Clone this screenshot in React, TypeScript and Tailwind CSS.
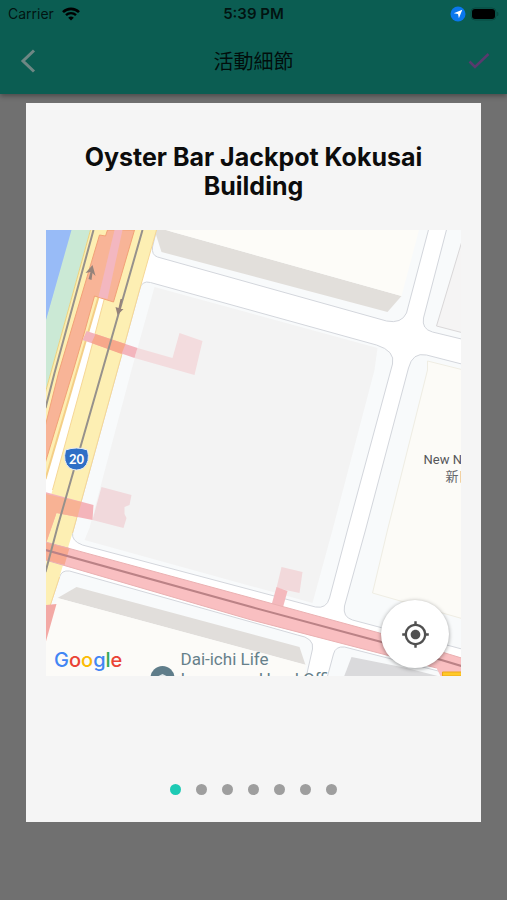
import React, { useState } from 'react'
import clsx from 'clsx'
import { MdMyLocation } from 'react-icons/md'

const SLIDES = ['1', '2', '3', '4', '5', '6', '7']

/**
 * Status Bar
 */
const StatusBar: React.FC = () => (
  <div className="grid grid-cols-3 items-center h-7 px-2 text-black/80">
    <div className="flex items-center gap-2 text-sm">
      <span>Carrier</span>
      <svg width="18" height="14" viewBox="0 0 18 14" fill="none" aria-hidden="true">
        <path d="M1 5.2a11.3 11.3 0 0 1 16 0" stroke="#000" strokeWidth="2.6" />
        <path d="M4 8.2a7.1 7.1 0 0 1 10 0" stroke="#000" strokeWidth="2.4" />
        <path d="M9 13.6 6.2 10.8a4 4 0 0 1 5.6 0Z" fill="#000" />
      </svg>
    </div>
    <p className="text-[15px] font-semibold text-center">5:39 PM</p>
    <div className="flex items-center justify-end gap-1">
      <svg width="16" height="16" viewBox="0 0 16 16" aria-hidden="true">
        <circle cx="8" cy="8" r="7.5" fill="#0a77ee" />
        <path d="M12.3 3.7 8.9 12.2 8 8 3.8 7.2Z" fill="#fff" />
      </svg>
      <svg width="29" height="14" viewBox="0 0 29 14" aria-hidden="true">
        <rect x="1" y="1" width="25" height="12" rx="4" fill="none" stroke="#084a41" />
        <rect x="2" y="2" width="23" height="10" rx="3" fill="#000" />
        <path d="M27.5 5v4q1-2 0-4Z" fill="#084a41" stroke="#084a41" />
      </svg>
    </div>
  </div>
)

/**
 * Header UI
 */
const Header: React.FC = () => (
  <header className="relative bg-[#0b5d52] shadow-[0_2px_5px_rgba(0,0,0,0.35)]">
    <StatusBar />
    <div className="flex justify-between items-center h-[66px] px-4">
      <button type="button" aria-label="Back" className="flex w-6 h-6 justify-center items-center">
        <svg width="16" height="24" viewBox="0 0 16 24" fill="none">
          <path d="M14 1.5 3 12 14 22.5" stroke="#6e8784" strokeWidth="3" />
        </svg>
      </button>
      <h1 className="text-xl text-black/85 font-['Noto_Sans_CJK_TC',sans-serif]">
        活動細節
      </h1>
      <button type="button" aria-label="Done" className="flex w-6 h-6 justify-center items-center">
        <svg width="22" height="18" viewBox="0 0 22 18" fill="none">
          <path d="M1.5 9.500 7 15 20.500 2" stroke="#593a6e" strokeWidth="2.5" />
        </svg>
      </button>
    </div>
  </header>
)

const MapDrawing: React.FC = () => (
  <svg
    className="block w-full h-full"
    viewBox="0 0 416 446"
    preserveAspectRatio="xMidYMid slice"
    role="img"
    aria-label="Map"
  >
    <rect width="416" height="446" fill="#fff" />

    {/* city blocks */}
    <g fill="#f8fafb" stroke="#d3d6dc">
      <path d="M112-4 107 17Q106 25 112 27L341 91Q356 94 361 83L384-4Z" />
      <path d="M402-4 378 88Q376 99 387 102L420 110V-4Z" />
      <path d="M94 60Q96 50 105 52.5L331 115Q350 121 347 134L302 300 284 368Q281 379 270 377L37 315Q26 311 27 303Z" />
      <path d="M420 135 381 125Q367 122 363 138L320 300 299 376Q297 387 307 390L420 420Z" />
      <path d="M-2 395 14 347Q16 340 24 341L252 405Q269 408 267 419L260 450H-2Z" />
      <path d="M281 450 288 424Q290 416 299 417L420 448V450Z" />
    </g>

    {/* buildings */}
    <path d="M109 0 116 22 342 82 356 66 127 2 115-2Z" fill="#e2dfdb" />
    <path d="M113-2 356 66 374-2Z" fill="#fdfcf8" />
    <path d="M418 6 391 96 418 103" fill="#f5f4f4" stroke="#d9d7d8" />
    <path d="M109 57 332 118 329 140 287 300 267 373 39 310 44 298 86 140Z" fill="#f3f3f3" />
    <path d="M382 131 418 140V389L327 363 342 300 382 140Z" fill="#fcfbf7" stroke="#efede3" />
    <path d="M31 357 12 368 260 435 254 417Z" fill="#e1dedb" />
    <path d="M12 368 261 435 258 446H0V400Z" fill="#fcfbf8" />
    <path d="M306 427 361 438 400 448H298Z" fill="#dadadc" />

    {/* water and river bank */}
    <path d="M0 0H27L0 94Z" fill="#98bbf7" />
    <path d="M26 0H45L0 162V92Z" fill="#cbe9d5" />

    {/* highway */}
    <path d="M45 0H63L53 67 0 249V162Z" fill="#fdeeb2" />
    <path d="M45 0 0 162" stroke="#ead27f" />
    <path d="M53 67 0 249" stroke="#f4cf87" strokeWidth="2" />
    <path d="M86 0H111L94 60 72 140 27 303 23 316 14 347 0 390V285L7 260 40 140 59 68Z" fill="#fdefb3" />
    <path d="M111 0 94 60 72 140 27 303M14 347 0 390M59 68 40 140 7 260" fill="none" stroke="#f6d796" />
    <path d="M54 5 60 6 62 0H89L68 72 49 66 39 102 27 143 0 232V195L13 143Z" fill="#f8b497" stroke="#f2a277" />
    <path d="M69 0H77L62 69 53 67Z" fill="#f3b7c0" />

    {/* underground passages */}
    <path d="M92 118 127 128 134 103 157 111 149 145 89 128Z" fill="#f3dcde" />
    <path d="M41 101 92 118 89 128 37 110Z" fill="#f3b5bd" />
    <path d="M50 104 80 114 76 124 46 113Z" fill="#f7a88b" />
    <path d="M56 257 86 265 84 275 79 277V284L81 288 78 298 47 290Z" fill="#f1d9dc" />
    <path d="M0 262 48 275 47 290 32 287 11 283 1 312H0Z" fill="#f4b4ba" />
    <path d="M0 264 36 272 32 287 11 283 1 312H0Z" fill="#f8b294" />
    <path d="M236 337 257 342 254 363 231 358Z" fill="#f2d9db" />
    <path d="M231 357 242 361 237 379 226 375Z" fill="#f4b9bd" />
    <path d="M0 375 11 374 0 413Z" fill="#f3a9a5" />

    {/* red avenue */}
    <path d="M0 312 206 368 334 403 416 428V446H395L391 438 206 390 0 330Z" fill="#f9bfc1" />
    <path d="M0 312 24 318 19 335 0 330Z" fill="#f8aa91" />
    <path d="M0 312 206 368 334 403 416 428M0 330 206 390 391 438" fill="none" stroke="#eab1b2" />
    <path d="M0 320 206 377 336 412 416 436" fill="none" stroke="#bb8286" strokeWidth="2" />
    <path d="M397 442H416V446H397Z" fill="#ffc928" stroke="#eda718" />

    {/* centre lines with travel direction */}
    <path d="M48 0 9 143 0 178M97 0 57 140 12 297 0 342" fill="none" stroke="#96918c" strokeWidth="2" />
    <path d="M47 35 40 43 45 42 43 49 46 50 47 43 50 46ZM77 69 75 79 78 79 72 85 70 77 73 78 75 69Z" fill="#95837a" />

    {/* route shield */}
    <path d="M20 220Q31 216 42 220 45 232 38 238 31 242 24 238 17 232 20 220Z" fill="#2f6fc6" stroke="#e9eef6" />
    <text x="31" y="234" textAnchor="middle" fill="#fff" className="text-[13px] font-bold font-['Lato',sans-serif]">
      20
    </text>

    {/* place labels */}
    <text x="378" y="234" fill="#55565a" className="text-[13px] font-['Roboto',sans-serif]">
      New N
    </text>
    <text x="400" y="251" fill="#66676b" className="text-[13px] font-['Noto_Sans_CJK_JP',sans-serif]">
      新日
    </text>
    <g fill="#66808a" className="text-[17px] font-['Roboto',sans-serif]">
      <text x="135" y="435">Dai-ichi Life</text>
      <text x="135" y="455">Insurance Head Office</text>
    </g>
    <circle cx="117" cy="448" r="12" fill="#5f7d8a" />
    <path d="M113 446 117 444 121 446Z" fill="#dfe6e9" />
  </svg>
)

const GoogleLogo: React.FC = () => (
  <p className="absolute left-2 bottom-1 text-xl leading-6 font-medium font-['Inter',sans-serif]">
    <span className="text-[#4285f4]">G</span>
    <span className="text-[#ea4335]">o</span>
    <span className="text-[#fbbc05]">o</span>
    <span className="text-[#4285f4]">g</span>
    <span className="text-[#34a853]">l</span>
    <span className="text-[#ea4335]">e</span>
  </p>
)

const App: React.FC = () => {
  const [activeSlide, setActiveSlide] = useState(0)

  return (
    <div className="flex flex-col min-h-screen bg-[#707070] font-['Inter',sans-serif]">
      <Header />
      <main className="flex flex-col flex-1 mx-[26px] mt-[9px] mb-[78px] px-5 bg-[#f5f5f5]">
        <h2 className="pt-10 pb-[29px] px-4 text-[25px] leading-[29px] font-bold text-center text-[#0c0c0c]">
          Oyster Bar Jackpot Kokusai Building
        </h2>
        <div className="relative h-[446px] overflow-hidden">
          <MapDrawing />
          <GoogleLogo />
          <button
            type="button"
            aria-label="My location"
            className="absolute right-3 bottom-2 flex w-[68px] h-[68px] justify-center items-center rounded-full bg-white text-[#505050] shadow-[0_1px_4px_rgba(0,0,0,0.4)]"
          >
            <MdMyLocation size={29} />
          </button>
        </div>
        <nav className="flex justify-center gap-[15px] mt-auto pb-[27px]" aria-label="Slides">
          {SLIDES.map((slide, index) => (
            <button
              key={slide}
              type="button"
              aria-label={`Slide ${slide}`}
              className={clsx([
                'w-[11px] h-[11px] rounded-full',
                index === activeSlide ? 'bg-[#1dcab4]' : 'bg-[#9e9e9e]',
              ])}
              onClick={() => setActiveSlide(index)}
            />
          ))}
        </nav>
      </main>
    </div>
  )
}

export default App
